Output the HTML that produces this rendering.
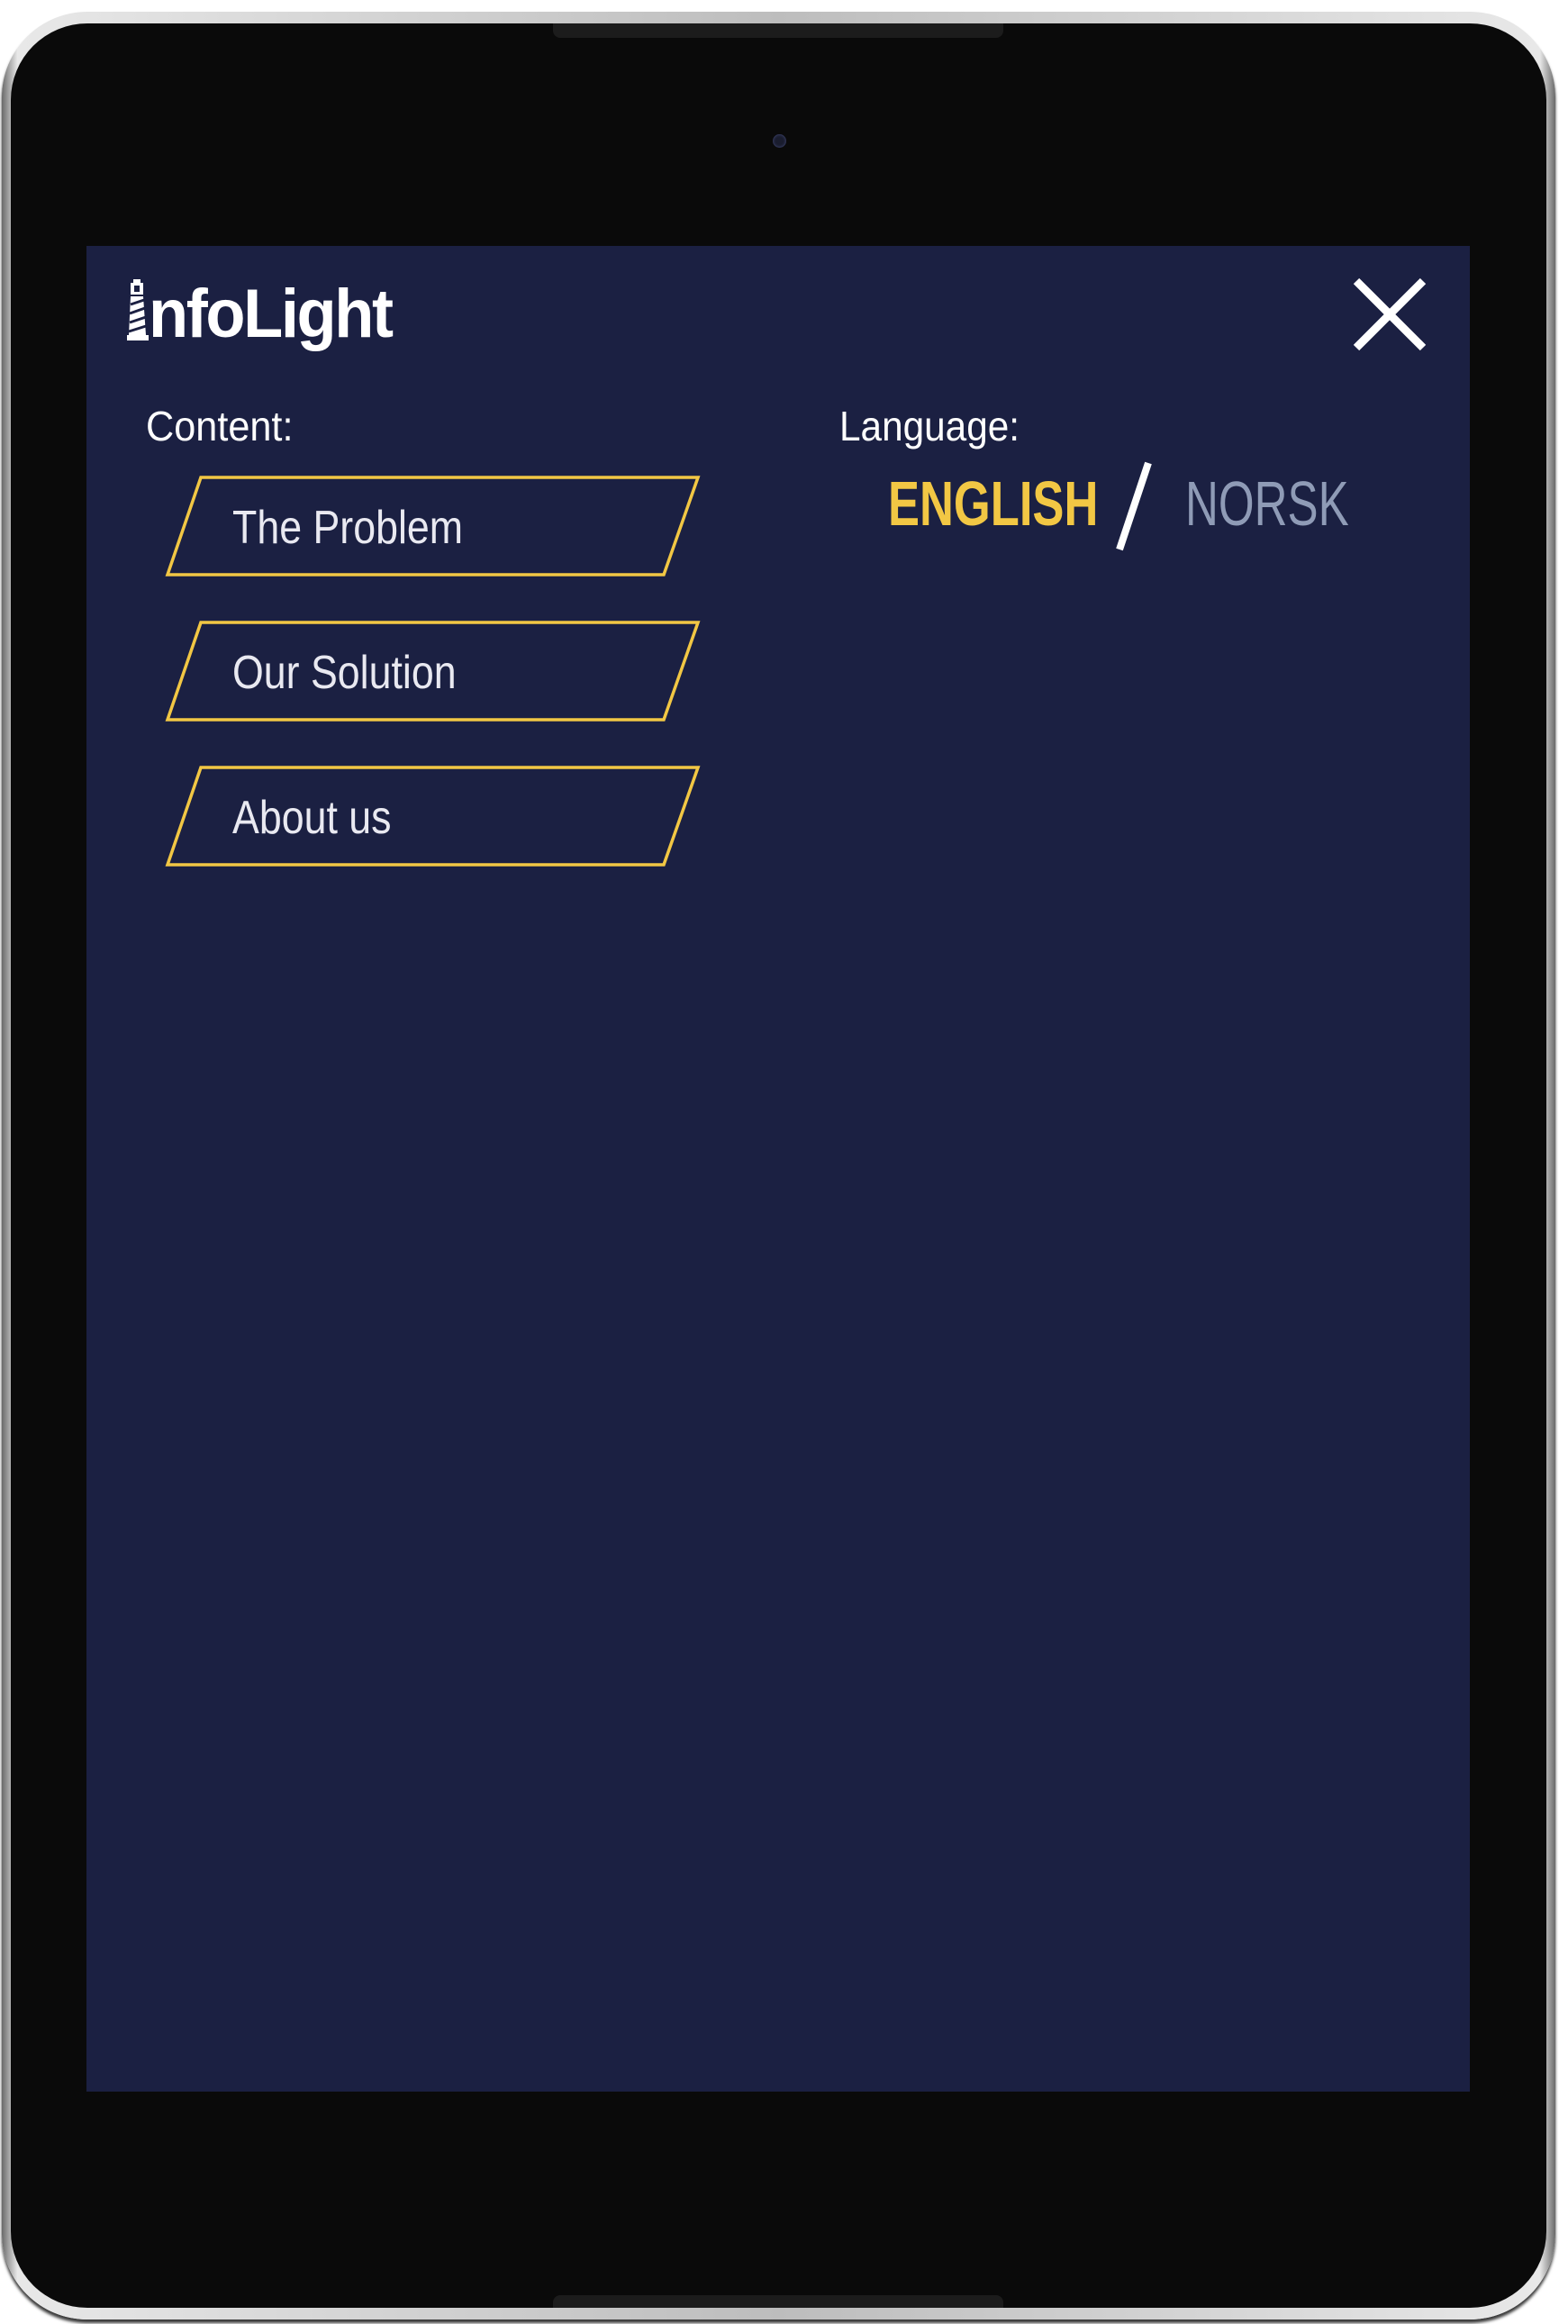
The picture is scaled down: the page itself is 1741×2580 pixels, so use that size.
<!DOCTYPE html>
<html><head><meta charset="utf-8"><style>
html,body{margin:0;padding:0;background:#fff;}
body{width:1741px;height:2580px;position:relative;overflow:hidden;font-family:"Liberation Sans",sans-serif;}
.outer{position:absolute;left:2px;top:13px;width:1725px;height:2562px;border-radius:95px;background:linear-gradient(90deg,#6a6a6a,#e8e8e8 1%,#bdbdbd 50%,#e8e8e8 99%,#6a6a6a);box-shadow:0 4px 3px #3a3a3a;}
.inner{position:absolute;left:12px;top:26px;width:1705px;height:2536px;border-radius:85px;background:#0a0a0a;}
.screen{position:absolute;left:96px;top:273px;width:1536px;height:2049px;background:#1b2042;}
.abs{position:absolute;white-space:nowrap;}
.lbl{color:#fff;font-size:46px;transform-origin:0 0;}
.btxt{color:#e9e9f1;font-size:52px;transform:scaleX(0.86);transform-origin:0 0;}
</style></head><body>
<div class="outer"></div>
<div class="inner"></div>
<div class="abs" style="left:614px;top:26px;width:500px;height:16px;background:#1c1c1c;border-radius:0 0 8px 8px;"></div>
<div class="abs" style="left:614px;top:2548px;width:500px;height:14px;background:#1c1c1c;border-radius:8px 8px 0 0;"></div>
<div class="abs" style="left:858px;top:149px;width:15px;height:15px;border-radius:50%;background:#1a1d2e;box-shadow:inset 0 0 3px #4a5080;"></div>
<div class="screen"></div>

<!-- logo -->
<svg class="abs" style="left:140px;top:310px" width="26" height="70" viewBox="0 0 26 70">
<rect x="8" y="0" width="8" height="4" fill="#fff"/>
<rect x="5" y="4" width="14" height="13" fill="#fff"/>
<rect x="9" y="7" width="6" height="7" fill="#1b2042"/>
<path d="M5 19 H19 L22 62 H25 V68 H1 V62 H3 Z" fill="#fff"/>
<path d="M5 28 L20 23 M4 38 L21 32 M4 48 L22 42 M3 58 L22 52" stroke="#1b2042" stroke-width="3"/>
</svg>
<div class="abs" style="left:165px;top:305px;font-size:76px;font-weight:bold;color:#fff;letter-spacing:-2.5px;transform:scaleX(0.95);transform-origin:0 0;">nfoLight</div>

<!-- close -->
<svg class="abs" style="left:1500px;top:306px" width="86" height="86" viewBox="0 0 86 86">
<path d="M6 6 L80 80 M80 6 L6 80" stroke="#fff" stroke-width="9"/>
</svg>

<div class="abs lbl" style="left:162px;top:446px;transform:scaleX(0.94);">Content:</div>
<div class="abs lbl" style="left:932px;top:446px;transform:scaleX(0.92);">Language:</div>

<svg class="abs" style="left:0;top:0" width="1741" height="1100">
<g fill="none" stroke="#f2c744" stroke-width="3.5">
<polygon points="223,530 775,530 737,638 186,638"/>
<polygon points="223,691 775,691 737,799 186,799"/>
<polygon points="223,852 775,852 737,960 186,960"/>
</g>
<path d="M1275 514 L1243 610" stroke="#fff" stroke-width="8"/>
</svg>

<div class="abs btxt" style="left:258px;top:556px;">The Problem</div>
<div class="abs btxt" style="left:258px;top:717px;">Our Solution</div>
<div class="abs btxt" style="left:258px;top:878px;">About us</div>

<div class="abs" style="left:986px;top:519px;font-size:70px;font-weight:bold;color:#f2c744;transform:scaleX(0.75);transform-origin:0 0;">ENGLISH</div>
<div class="abs" style="left:1316px;top:519px;font-size:70px;color:#8f9bb6;transform:scaleX(0.73);transform-origin:0 0;">NORSK</div>
</body></html>
